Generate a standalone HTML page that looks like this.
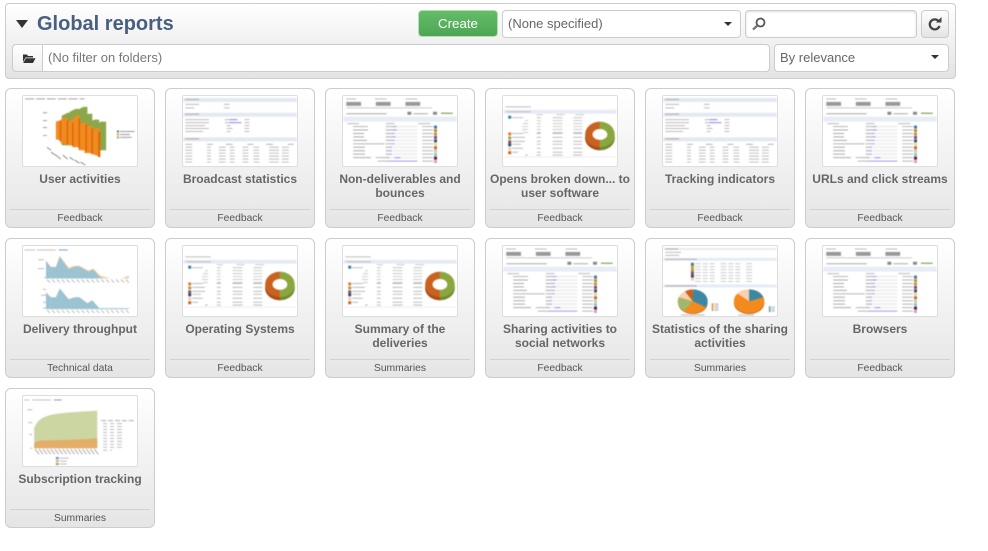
<!DOCTYPE html>
<html><head><meta charset="utf-8"><title>Global reports</title>
<style>
html,body{margin:0;padding:0;background:#fff;width:988px;height:551px;overflow:hidden;font-family:"Liberation Sans",sans-serif}
.a{position:absolute;box-sizing:border-box}
#hd{left:5px;top:3px;width:951px;height:76px;border:1px solid #ccc;border-radius:4px;background:linear-gradient(#fff,#e3e3e3)}
.f{background:#fff;border:1px solid #ccc;border-radius:4px;color:#666;font-size:13px;line-height:24px;padding-left:5px;white-space:nowrap}
.car{width:0;height:0;border-left:4px solid transparent;border-right:4px solid transparent;border-top:4px solid #333}
.c{position:absolute;box-sizing:border-box;width:150px;height:140px;border:1px solid #ccc;border-radius:6px;background:linear-gradient(#fff 0,#f2f2f2 50%,#e5e5e5 100%)}
.th{position:absolute;left:16px;top:6px;width:116px;height:72px;background:#fff;border:1px solid #ddd;box-sizing:border-box;border-radius:2px;overflow:hidden}
.th svg{position:absolute;left:0;top:0;width:114px;height:70px;filter:blur(.45px)}
.t{position:absolute;left:1px;width:146px;top:83px;text-align:center;font-weight:bold;font-size:12px;line-height:14px;color:#666}
.s{position:absolute;left:4px;right:4px;top:120px;border-top:1px solid #d2d2d2}
.k{position:absolute;left:0;right:0;top:123px;text-align:center;font-size:10.300px;line-height:13px;color:#555}
</style></head><body>
<svg width="0" height="0" style="position:absolute"><defs>
<symbol id="bars" viewBox="0 0 115 71">
<path d="M2 3H62" stroke="#aaa" stroke-width="1.2" stroke-dasharray="9 2"/>
<path d="M20 17H24M20 25H24M20 32H24M20 40H24" stroke="#999"/>
<g fill="#8ca64a"><path d="M39 20L45 17H48V50H39Z"/><path d="M47 16L53 13H56V50H47Z"/><path d="M55 14L61 11H65V52H55Z"/><path d="M62 20L66 18H70V56H62Z"/><path d="M68 26L72 24H77V58H68Z"/><path d="M75 28L79 26H84V55H75Z"/></g>
<g fill="#f38a1e"><path d="M33 26L36 25H38V45L33 44Z"/><path d="M38 24L41 22H45V48H38Z"/><path d="M44 27L47 25H50V50H44Z"/><path d="M50 23L53 20H57V52H50Z"/><path d="M56 29L60 27H64V55H56Z"/><path d="M62 32L66 30H70V58H62Z"/><path d="M68 36L72 33H78V62L68 58Z"/></g>
<g fill="#d6690c"><rect x="37" y="25" width="1.500" height="21"/><rect x="44" y="25" width="1.500" height="24"/><rect x="49.500" y="27" width="1.500" height="24"/><rect x="56" y="23" width="1.500" height="30"/><rect x="63" y="29" width="1.500" height="27"/><rect x="69" y="33" width="1.500" height="26"/><rect x="76" y="36" width="2" height="26"/></g>
<path d="M24 52l4 3M28 57l5 3M33 60l5 4M40 60l5 4M47 62l4 3M52 65l5 3M58 67l5 3" stroke="#888"/>
<rect x="95" y="35" width="2" height="2" fill="#2f7f9f"/><rect x="95" y="38" width="2" height="2" fill="#f38a1e"/><rect x="95" y="41" width="2" height="2" fill="#8ca64a"/>
<path d="M98 36H113M98 39H108M98 42H110" stroke="#999"/>
</symbol>
<symbol id="stats" viewBox="0 0 115 71">
<rect x="0" y="2" width="115" height="4" fill="#e3e8f2"/><path d="M2 3.500H16" stroke="#aaa"/><path d="M2 8.500H16M41 8.500H47M2 12H11M41 12H47" stroke="#bbb"/>
<rect x="0" y="17" width="115" height="4" fill="#e3e8f2"/><path d="M2 18.500H16" stroke="#aaa"/>
<path d="M2 24H26M2 27H26M2 30H22M2 33H26M2 36H20" stroke="#bbb"/><path d="M42 24H54M42 27H54" stroke="#bbb"/><path d="M47 24H55M47 27H59" stroke="#8f8fe8"/><path d="M62 24H67M62 27H67M62 30H67M62 33H67M62 36H67M44 30H48M44 33H50M44 36H48" stroke="#bbb"/>
<rect x="0" y="42" width="115" height="4" fill="#e3e8f2"/><path d="M2 43.500H16" stroke="#aaa"/>
<path d="M2 49H112" stroke="#aaa" stroke-dasharray="7 15 6 13"/>
<path d="M2 52H112M2 55H112M2 58H112M2 61H112M2 64H112M2 67H112" stroke="#bbb" stroke-dasharray="7 15 4 8 7 4 5 8 6 5 6 10 10 3"/>
</symbol>
<symbol id="table" viewBox="0 0 115 71">
<path d="M3 3H13M32 3H44M63 3H75" stroke="#bbb"/>
<rect x="3" y="6" width="15" height="4" fill="#999"/><rect x="33" y="6" width="15" height="4" fill="#999"/><rect x="63" y="6" width="15" height="4" fill="#999"/>
<path d="M3 12H90" stroke="#ccc"/>
<path d="M3 18H44M71 18H86" stroke="#aaa"/><rect x="65" y="16" width="4" height="3" fill="#888"/><rect x="91" y="16" width="4" height="3" fill="#888"/><path d="M99 17.500H111" stroke="#7f9f4a" stroke-width="1.200"/>
<rect x="0" y="21" width="115" height="5" fill="#e8edf5"/>
<path d="M4 28H16M43 28H52M76 28H88" stroke="#bbb"/>
<path d="M43 31H75M43 34.500H75M43 38H75M43 41.500H75M43 45H75M43 48.500H75M43 52H75M43 55.500H75M43 59H75M43 62.500H75" stroke="#f0f0f0" stroke-width="2"/>
<path d="M10 31H25M10 34.500H25M10 38H21M10 41.500H21M10 45H24M10 48.500H42M10 52H22M10 55.500H22M10 59H22M10 62.500H28" stroke="#aaa"/>
<path d="M43 31H50M43 34.500H50M43 38H50M43 41.500H50M43 45H50M43 48.500H50M43 52H47M43 55.500H47M43 59H47M43 62.500H47M33 62.500H43M35 66H46" stroke="#b5b5b5"/>
<path d="M50 31H54M50 34.500H54M50 38H52M50 41.500H53M50 45H52M50 48.500H52M47 52H49M47 55.500H49M47 59H49M52 62.500H58M46 66H75" stroke="#9a9aec"/>
<path d="M80 31H91M80 34.500H91M80 38H91M80 41.500H91M80 45H91M80 48.500H91M80 52H91M80 55.500H91M80 59H91M80 62.500H91M80 66H91" stroke="#b5b5b5"/>
<rect x="92" y="30" width="3" height="3" fill="#2f7f9f"/><rect x="92" y="33.500" width="3" height="3" fill="#e37a1a"/><rect x="92" y="37" width="3" height="3" fill="#8ca64a"/><rect x="92" y="40.500" width="3" height="3" fill="#9d3b6b"/><rect x="92" y="44" width="3" height="3" fill="#1f5566"/><rect x="92" y="47.500" width="3" height="3" fill="#f4c9a0"/><rect x="92" y="51" width="3" height="3" fill="#c9621f"/><rect x="92" y="54.500" width="3" height="3" fill="#bcd0a0"/><rect x="92" y="58" width="3" height="3" fill="#90bcd0"/><rect x="92" y="61.500" width="3" height="3" fill="#6b1030"/><rect x="92" y="65" width="3" height="3" fill="#d4a0c0"/>
</symbol>
<symbol id="donut" viewBox="0 0 115 71">
<path d="M2 11H28" stroke="#bbb"/><rect x="0" y="14" width="115" height="4" fill="#e6ebf4"/><path d="M3 16H28" stroke="#bbb"/>
<path d="M34 19H40M54 19H62M73 19H82" stroke="#ccc"/>
<rect x="5" y="20" width="3" height="3" fill="#2f7f9f"/><path d="M9 22H20M34 22H38M50 22H60M71 22H80" stroke="#bbb"/>
<path d="M22 25H25M34 25H38M50 25H60M71 25H80M20 28H25M34 28H38M50 28H60M71 28H80M19 31H25M34 31H38M50 31H60M71 31H80M19 34H25M34 34H38M50 34H60M71 34H80M20 37H25M34 37H38M50 37H60M71 37H80" stroke="#ccc"/>
<rect x="5" y="37" width="3" height="3" fill="#e37a1a"/><rect x="5" y="41" width="3" height="3" fill="#8ca64a"/><rect x="5" y="45" width="3" height="3" fill="#9d3b6b"/><rect x="5" y="48" width="3" height="3" fill="#1f5566"/><rect x="5" y="52" width="3" height="3" fill="#f4c9a0"/><rect x="5" y="56" width="3" height="3" fill="#c9621f"/>
<path d="M9 38H20M9 42H22M9 46H22M9 49H18M9 53H20M9 57H15M34 38H38M50 38H60M71 38H80M34 42H38M50 42H60M71 42H80M34 46H38M50 46H60M71 46H80M34 49H38M50 49H60M71 49H80M34 53H38M50 53H60M71 53H80M34 57H38M50 57H60M71 57H80M22 60H25M34 60H38M50 60H60M71 60H80" stroke="#bbb"/>
<path d="M1 62H114" stroke="#eee"/>
<path d="M98 26A15 13 0 0 0 83 39V43A15 12 0 0 0 98 55Z" fill="#c9621f"/><path d="M98 26A15 13 0 0 1 113 39V43A15 12 0 0 1 98 55Z" fill="#8ca63e"/>
<path d="M83 40A15 12 0 0 0 98 52V55A15 12 0 0 1 83 43Z" fill="#a84e15"/><path d="M113 40A15 12 0 0 1 98 52V55A15 12 0 0 0 113 43Z" fill="#6f8a2e"/>
<ellipse cx="98" cy="39" rx="7.500" ry="5.500" fill="#fff"/>
</symbol>
<symbol id="area" viewBox="0 0 115 71">
<path d="M1 4H12M14 4H33" stroke="#bbb"/><path d="M36 4H45" stroke="#6a9fdb"/><path d="M15 14H21M15 23H21M21 32H23M20 44H23M18 50H23M20 57H23M20 63H23" stroke="#bbb"/>
<path d="M23 15L28 21H33L37 10L46 22L52 20L57 20L66 25L71 23L78 30L88 33H100L107 30V33H23Z" fill="#f6c79c"/>
<path d="M23 15L28 21.500H33L37 11L46 23.500L52 21L57 21L66 26L71 24L79 33H23Z" fill="#9cc3d2"/>
<path d="M23 47L28 52H33L37 43L46 54L52 52L57 52L65 58L70 55L77 63H107V64H23Z" fill="#9cc3d2"/>
<path d="M24 34l3 3M29 34l3 3M34 34l3 3M39 34l3 3M44 34l3 3M49 34l3 3M54 34l3 3M59 34l3 3M64 34l3 3M69 34l3 3M74 34l3 3M79 34l3 3M84 34l3 3M89 34l3 3M94 34l3 3M99 34l3 3M104 34l3 3M24 65l3 3M29 65l3 3M34 65l3 3M39 65l3 3M44 65l3 3M49 65l3 3M54 65l3 3M59 65l3 3M64 65l3 3M69 65l3 3M74 65l3 3M79 65l3 3M84 65l3 3M89 65l3 3M94 65l3 3M99 65l3 3M104 65l3 3" stroke="#bbb"/>
</symbol>
<symbol id="pies" viewBox="0 0 115 71">
<rect x="0" y="2" width="115" height="2" fill="#e6ebf4"/><path d="M2 3H15" stroke="#aaa"/><path d="M2 6.500H18M2 9.500H16" stroke="#bbb"/>
<rect x="0" y="12" width="115" height="3" fill="#e6ebf4"/><path d="M2 13.500H34" stroke="#aaa"/>
<path d="M32 18H90M32 21H90M32 24H90M32 27H90M32 30H90M32 33H90M32 36H90" stroke="#ccc" stroke-dasharray="6 2 5 2 5 6"/>
<rect x="28" y="17" width="3" height="3" fill="#2f7f9f"/><rect x="28" y="20" width="3" height="3" fill="#f38a1e"/><rect x="28" y="23" width="3" height="3" fill="#8ca64a"/><rect x="28" y="26" width="3" height="3" fill="#9d3b6b"/><rect x="28" y="29" width="3" height="3" fill="#1f5566"/><rect x="28" y="32" width="3" height="3" fill="#f4c9a0"/>
<rect x="0" y="39" width="115" height="3" fill="#e6ebf4"/><path d="M2 40.500H34" stroke="#aaa"/>
<ellipse cx="30" cy="58" rx="15" ry="11" fill="#d07018"/>
<path d="M30 56L30 44A15 12 0 0 1 43 62Z" fill="#3b88a5"/>
<path d="M30 56L43 62A15 12 0 0 1 21 66Z" fill="#f38a1e"/>
<path d="M30 56L21 66A15 12 0 0 1 15.500 52Z" fill="#a3b768"/>
<path d="M30 56L15.500 52A15 12 0 0 1 22 46Z" fill="#f7d0ae"/>
<path d="M30 56L22 46A15 12 0 0 1 30 44Z" fill="#c9621f"/>
<ellipse cx="87" cy="58" rx="15.500" ry="11" fill="#d07018"/>
<ellipse cx="87" cy="56" rx="15.500" ry="12" fill="#f38a1e"/>
<path d="M87 56V44A15.500 12 0 0 1 101.500 52Z" fill="#3b88a5"/><path d="M87 56L75 48A15.500 12 0 0 1 87 44Z" fill="#f7d0ae"/>
<path d="M52 59H56M52 61H56M52 63H56M52 65H56M110 62H113M110 64H113M110 66H113" stroke="#aaa"/>
<rect x="49" y="58" width="2" height="8" fill="#e9a060"/><rect x="107" y="61" width="2" height="6" fill="#7aa6bb"/>
<path d="M18 70H42M76 70H92" stroke="#bbb"/>
</symbol>
<symbol id="sub" viewBox="0 0 115 71">
<path d="M1 4H6M9 4H28" stroke="#bbb"/><path d="M31 4H39" stroke="#6a9fdb"/><path d="M4 14H9M5 27H9M6 39H9M7 53H9" stroke="#bbb"/>
<path d="M11 53V33C13 26 18 22 25 20C35 17 55 16 75 15V53Z" fill="#cbd6a3"/><path d="M11 53V48C13 46 16 45 22 45C40 45 60 44 75 43V53Z" fill="#e4ad68"/>
<path d="M12 54l4 5M16 54l4 5M20 54l4 5M24 54l4 5M28 54l4 5M32 54l4 5M36 54l4 5M40 54l4 5M44 54l4 5M48 54l4 5M52 54l4 5M56 54l4 5M60 54l4 5M64 54l4 5M68 54l4 5M72 54l4 5" stroke="#aaa"/>
<rect x="33" y="62" width="3" height="2" fill="#4a90c0"/><rect x="33" y="65" width="3" height="2" fill="#e9a060"/><rect x="33" y="68" width="3" height="2" fill="#8ca64a"/><path d="M37 63H46M37 66H44M37 69H44" stroke="#bbb"/>
<path d="M79 25H112" stroke="#aaa" stroke-dasharray="5 2"/>
<path d="M81 28H104M81 31H104M81 34H104M81 37H104M81 40H104M81 43H104M81 46H104M81 49H104M81 52H104M81 55H90" stroke="#bbb" stroke-dasharray="4 3 4 3 5 8"/>
</symbol>
</defs></svg>

<div class="a" id="hd"></div>
<div class="a" style="left:16px;top:20px;width:0;height:0;border-left:6px solid transparent;border-right:6px solid transparent;border-top:8px solid #333"></div>
<div class="a" style="left:37px;top:12px;font-size:20px;line-height:24px;font-weight:bold;color:#48607e;white-space:nowrap">Global reports</div>
<div class="a" style="left:418px;top:10px;width:80px;height:27px;border:1px solid #b8dcb8;border-radius:4px;background:linear-gradient(#62bd67,#4ea654);color:#fff;font-size:13.300px;line-height:25px;text-align:center">Create</div>
<div class="a f" style="left:502px;top:10px;width:239px;height:28px;line-height:26px">(None specified)</div>
<div class="a car" style="left:724px;top:22px"></div>
<div class="a f" style="left:745px;top:10px;width:172px;height:28px;box-shadow:inset 0 1px 2px #ddd"></div>
<svg class="a" style="left:751px;top:16px" width="16" height="16" viewBox="0 0 16 16"><circle cx="9.500" cy="6.500" r="4" fill="none" stroke="#555" stroke-width="1.800"/><path d="M6.500 9.500L2 13.500" stroke="#777" stroke-width="2.400"/></svg>
<div class="a" style="left:921px;top:10px;width:28px;height:28px;border:1px solid #ccc;border-radius:4px;background:linear-gradient(#fff,#e4e4e4)"></div>
<svg class="a" style="left:927px;top:16px" width="16" height="16" viewBox="0 0 16 16"><path d="M12.500 10A5 5 0 1 1 11.500 5" fill="none" stroke="#444" stroke-width="2.300"/><path d="M9 6.500H14.500V1Z" fill="#444"/></svg>
<div class="a" style="left:12px;top:44px;width:31px;height:28px;border:1px solid #ccc;border-radius:4px 0 0 4px;background:linear-gradient(#fff,#eee)"></div>
<svg class="a" style="left:22px;top:53px" width="14" height="11" viewBox="0 0 14 11"><path d="M1 1.500H5L6 3H11V4.500H3.500L1 9Z" fill="#333"/><path d="M3.800 5.200H13.500L11 10H1.200Z" fill="#333"/></svg>
<div class="a f" style="left:42px;top:44px;width:728px;height:28px;line-height:26px;border-radius:0 4px 4px 0;color:#777">(No filter on folders)</div>
<div class="a f" style="left:774px;top:44px;width:175px;height:28px;line-height:26px">By relevance</div>
<div class="a car" style="left:931px;top:55px"></div>

<div class="c" style="left:5px;top:88px"><div class="th"><svg><use href="#bars"/></svg></div><div class="t">User activities</div><div class="s"></div><div class="k">Feedback</div></div>
<div class="c" style="left:165px;top:88px"><div class="th"><svg><use href="#stats"/></svg></div><div class="t">Broadcast statistics</div><div class="s"></div><div class="k">Feedback</div></div>
<div class="c" style="left:325px;top:88px"><div class="th"><svg><use href="#table"/></svg></div><div class="t">Non-deliverables and bounces</div><div class="s"></div><div class="k">Feedback</div></div>
<div class="c" style="left:485px;top:88px"><div class="th"><svg><use href="#donut"/></svg></div><div class="t">Opens broken down... to user software</div><div class="s"></div><div class="k">Feedback</div></div>
<div class="c" style="left:645px;top:88px"><div class="th"><svg><use href="#stats"/></svg></div><div class="t">Tracking indicators</div><div class="s"></div><div class="k">Feedback</div></div>
<div class="c" style="left:805px;top:88px"><div class="th"><svg><use href="#table"/></svg></div><div class="t">URLs and click streams</div><div class="s"></div><div class="k">Feedback</div></div>

<div class="c" style="left:5px;top:238px"><div class="th"><svg><use href="#area"/></svg></div><div class="t">Delivery throughput</div><div class="s"></div><div class="k">Technical data</div></div>
<div class="c" style="left:165px;top:238px"><div class="th"><svg><use href="#donut"/></svg></div><div class="t">Operating Systems</div><div class="s"></div><div class="k">Feedback</div></div>
<div class="c" style="left:325px;top:238px"><div class="th"><svg><use href="#donut"/></svg></div><div class="t">Summary of the deliveries</div><div class="s"></div><div class="k">Summaries</div></div>
<div class="c" style="left:485px;top:238px"><div class="th"><svg><use href="#table"/></svg></div><div class="t">Sharing activities to social networks</div><div class="s"></div><div class="k">Feedback</div></div>
<div class="c" style="left:645px;top:238px"><div class="th"><svg><use href="#pies"/></svg></div><div class="t">Statistics of the sharing activities</div><div class="s"></div><div class="k">Summaries</div></div>
<div class="c" style="left:805px;top:238px"><div class="th"><svg><use href="#table"/></svg></div><div class="t">Browsers</div><div class="s"></div><div class="k">Feedback</div></div>

<div class="c" style="left:5px;top:388px"><div class="th"><svg><use href="#sub"/></svg></div><div class="t">Subscription tracking</div><div class="s"></div><div class="k">Summaries</div></div>
</body></html>
